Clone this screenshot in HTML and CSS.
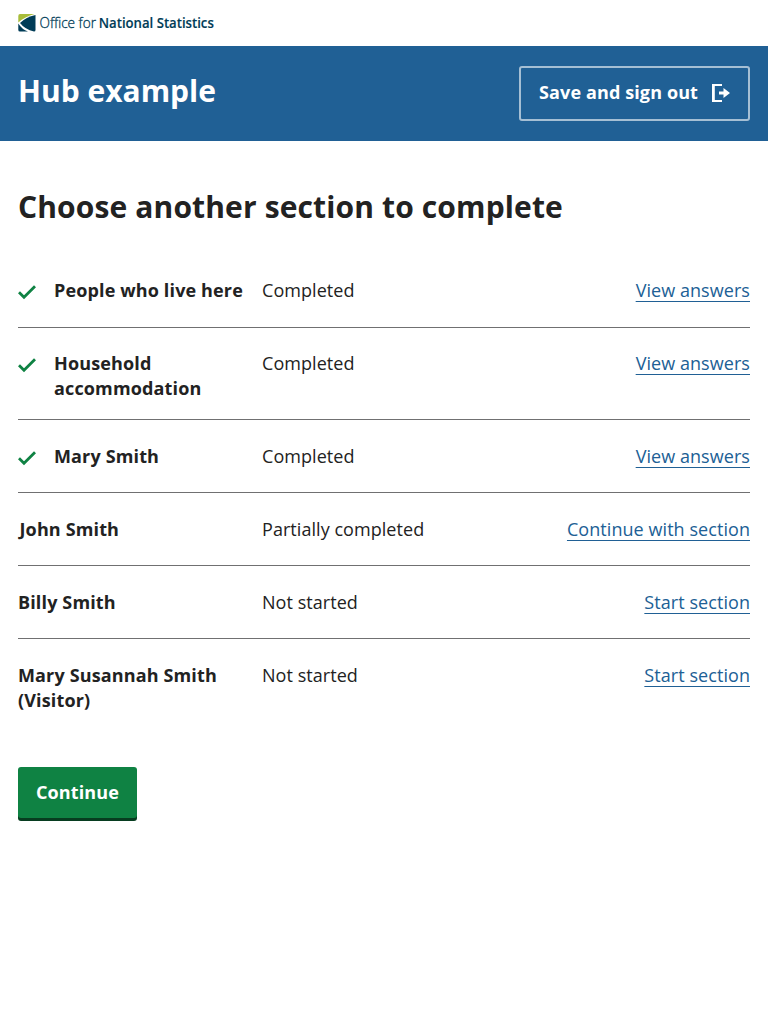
FILE: index.html
```html
<!DOCTYPE html>
<html lang="en">
<head>
<meta charset="utf-8">
<title>Hub example</title>
<link rel="stylesheet" href="styles.css">
</head>
<body>
<header>
  <div class="brand">
    <svg class="logo" width="196" height="18" viewBox="0 0 196 18" role="img" aria-label="Office for National Statistics">
      <path fill="#a8bd3a" d="M2 0H16.500Q7 2.500 0.300 8.500V2Q0.300 0 2 0Z"/>
      <path fill="#003c57" d="M17.500 1V16Q17.500 17.500 16 17.500Q7 15.500 2 9Q8 3 17.500 1Z"/>
      <path fill="#003c57" d="M0.300 9.500Q4 15.500 10 17.500H2Q0.300 17.500 0.300 16Z"/>
      <text class="logo-light" x="21.500" y="14" textLength="56.500" lengthAdjust="spacingAndGlyphs">Office for</text>
      <text class="logo-bold" x="80.800" y="14" textLength="115" lengthAdjust="spacingAndGlyphs">National Statistics</text>
    </svg>
  </div>
  <div class="banner">
    <div class="title">Hub example</div>
    <button class="signout" type="button">Save and sign out
      <svg width="18" height="18" viewBox="0 0 18 18"><path fill="#fff" d="M0 0H10V2H2.800V16H10V18H0Z"/><path fill="#fff" d="M7 7.500H11.500V4L18 9L11.500 14V10.500H7Z"/></svg>
    </button>
  </div>
</header>
<main>
  <h1>Choose another section to complete</h1>
  <ul class="summary">
    <li class="row"><div class="name"><svg class="check" viewBox="0 0 18 18"><path d="M1 9.200L6 14.200L17 3.200"/></svg><span>People who live here</span></div><div class="state">Completed</div><a href="#">View answers</a></li>
    <li class="row"><div class="name"><svg class="check" viewBox="0 0 18 18"><path d="M1 9.200L6 14.200L17 3.200"/></svg><span>Household accommodation</span></div><div class="state">Completed</div><a href="#">View answers</a></li>
    <li class="row"><div class="name"><svg class="check" viewBox="0 0 18 18"><path d="M1 9.200L6 14.200L17 3.200"/></svg><span>Mary Smith</span></div><div class="state">Completed</div><a href="#">View answers</a></li>
    <li class="row"><div class="name overhang">John Smith</div><div class="state">Partially completed</div><a href="#">Continue with section</a></li>
    <li class="row"><div class="name">Billy Smith</div><div class="state">Not started</div><a href="#">Start section</a></li>
    <li class="row"><div class="name">Mary Susannah Smith (Visitor)</div><div class="state">Not started</div><a href="#">Start section</a></li>
  </ul>
  <button class="continue" type="button">Continue</button>
</main>
</body>
</html>
```

FILE: styles.css
```css
* { box-sizing: border-box; }
body { margin: 0; background: #fff; color: #222; font: 18px/25px "Open Sans", sans-serif; }
.brand { height: 46px; padding: 14px 18px; }
.logo { display: block; overflow: visible; }
.logo text { fill: #003c57; font-family: "Open Sans", sans-serif; font-size: 14.500px; }
.logo .logo-light { font-weight: 300; stroke: #003c57; stroke-width: .3px; }
.logo .logo-bold { font-weight: 600; stroke: #003c57; stroke-width: .15px; }
.banner { height: 95px; padding: 20px 18px; background: #206095; color: #fff; display: flex; justify-content: space-between; }
.title { font-size: 30px; line-height: 50px; font-weight: 700; }
button { font: 700 18px/25px "Open Sans", sans-serif; color: #fff; cursor: pointer; letter-spacing: .12px; }
.signout { width: 231px; height: 55px; padding: 0 18px 2px; border: 2px solid rgba(255,255,255,.6); border-radius: 3px; background: transparent; display: flex; align-items: center; justify-content: space-between; white-space: nowrap; }
main { padding: 45px 18px; }
h1 { margin: 0; font-size: 30px; line-height: 42px; letter-spacing: .13px; }
.summary { list-style: none; margin: 27px 0 0; padding: 0; }
.row { display: grid; grid-template-columns: 226px 1fr auto; column-gap: 18px; align-items: start; padding: 23.300px 0 18.100px; min-height: 73px; border-bottom: 1px solid #707071; }
.row:last-child { border-bottom: 0; }
.name { display: flex; gap: 18px; font-weight: 700; letter-spacing: .14px; }
.overhang { padding-left: 1.500px; }
.state { letter-spacing: .05px; }
.check { width: 18px; height: 18px; flex: none; margin-top: 5px; }
.check path { fill: none; stroke: #0f8243; stroke-width: 2.800; }
a { color: #206095; letter-spacing: .06px; text-decoration: underline; text-decoration-thickness: 1px; text-underline-offset: 4px; }
.continue { height: 51px; margin-top: 36px; padding: 0 18px; border: 0; border-radius: 3px; background: #0f8243; box-shadow: 0 3px 0 #073d20; }
```
